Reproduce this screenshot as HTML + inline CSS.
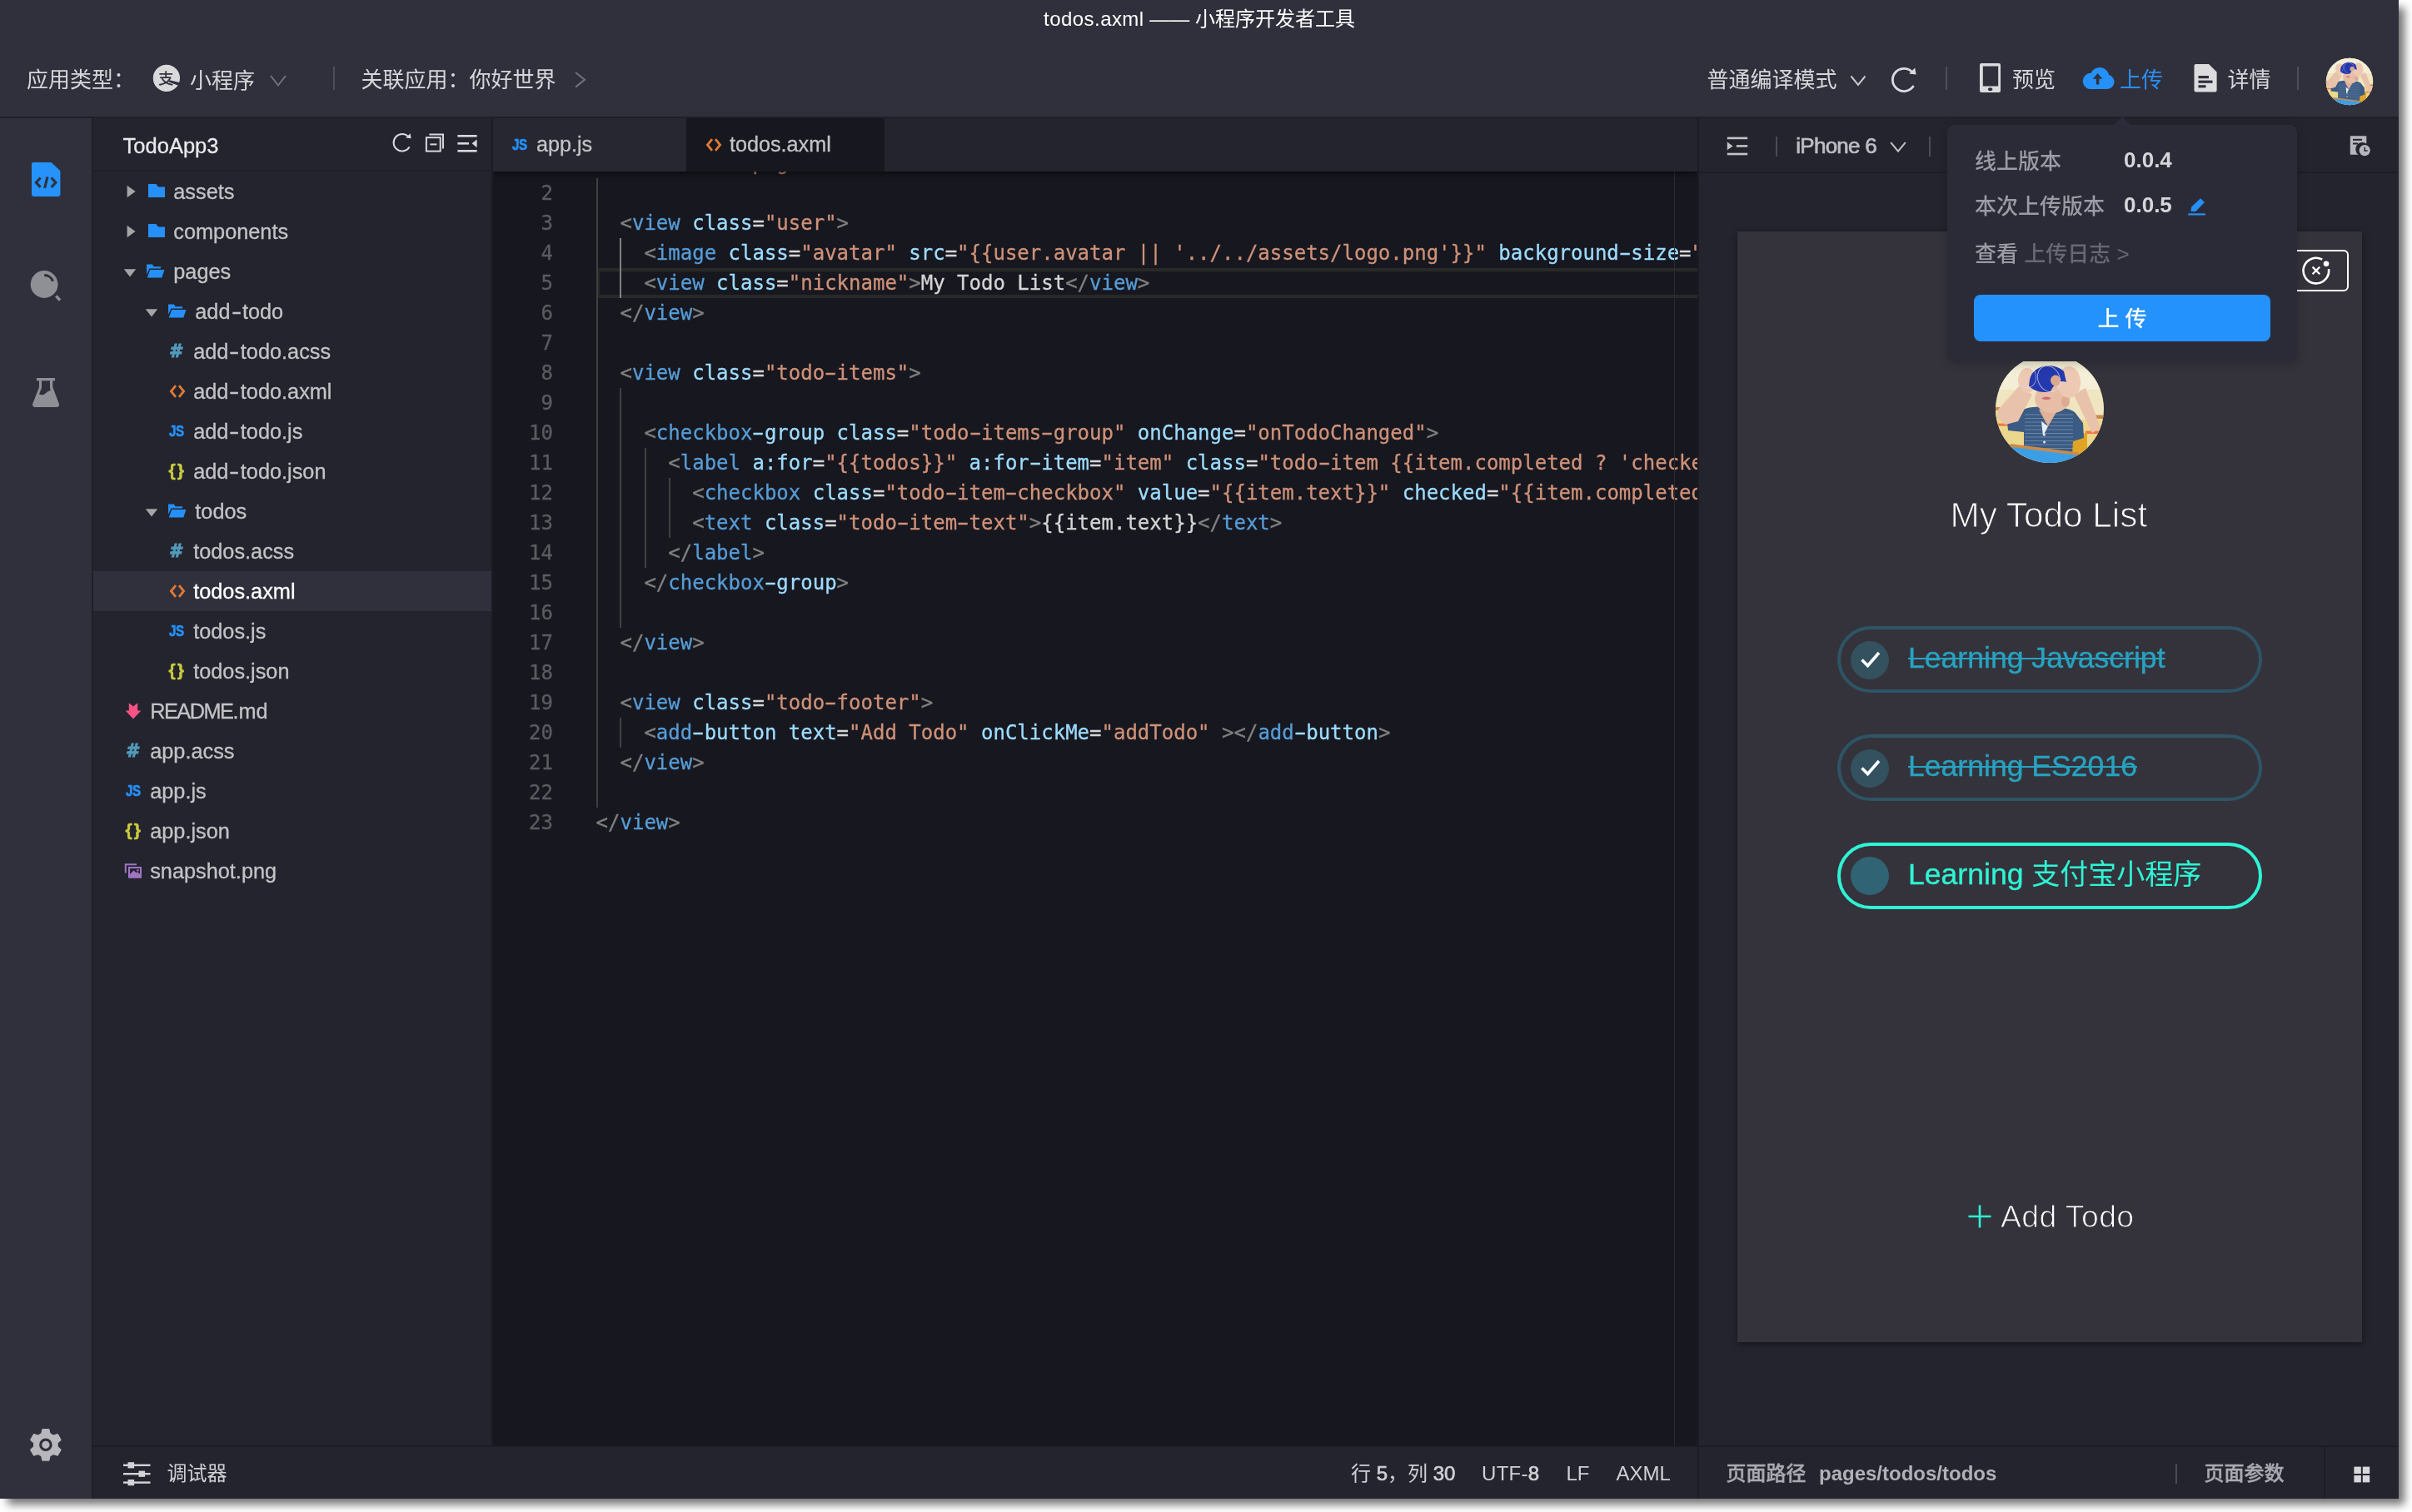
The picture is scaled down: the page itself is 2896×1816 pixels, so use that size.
<!DOCTYPE html>
<html lang="zh-CN">
<head>
<meta charset="utf-8">
<title>todos.axml —— 小程序开发者工具</title>
<style>
*{box-sizing:border-box;margin:0;padding:0}
html,body{width:2896px;height:1816px;overflow:hidden;background:#fff}
body{font-family:"Liberation Sans","Noto Sans CJK SC",sans-serif;color:#d6d6da;position:relative;-webkit-font-smoothing:antialiased}
.abs{position:absolute}
#win{will-change:transform;position:absolute;left:0;top:0;width:2880px;height:1800px;background:#30303c;box-shadow:8px 8px 10px -1px rgba(0,0,0,.55);overflow:visible}
#clip{position:absolute;left:0;top:0;width:2880px;height:1800px;overflow:hidden}
/* title + toolbar */
#title{position:absolute;left:0;top:0;width:2880px;height:46px;text-align:center;font-size:24px;line-height:46px;color:#fff;white-space:nowrap}
#toolbar{position:absolute;left:0;top:0;width:2880px;height:140px;background:#30303c}
.tb{position:absolute;font-size:26px;line-height:40px;height:40px;top:76px;white-space:nowrap;color:#d6d6da}
.vsep{position:absolute;width:2px;background:#4d4d59}
#tbline{position:absolute;left:0;top:140px;width:2880px;height:2px;background:#1f1f28}
/* activity bar */
#act{position:absolute;left:0;top:142px;width:110px;height:1658px;background:#30303c}
#actline{position:absolute;left:110px;top:142px;width:2px;height:1658px;background:#1f1f28}
/* sidebar */
#side{position:absolute;left:112px;top:142px;width:478px;height:1594px;background:#24242e}
#sidehead{position:absolute;left:0;top:0;width:478px;height:64px;border-bottom:2px solid #1e1e27}
#sideline{position:absolute;left:590px;top:142px;width:2px;height:1594px;background:#1b1b23}
.row{position:absolute;left:0;width:478px;height:48px;font-size:25.3px;line-height:48px;color:#c3c3c6;white-space:nowrap}
.row.sel{background:#30303c;color:#fff}
.row span.t{position:absolute;top:0;-webkit-text-stroke-width:.3px}
.hy{display:inline-block;width:14.4px;text-align:center;transform:scaleX(1.45)}
/* editor */
#tabs{position:absolute;left:592px;top:142px;width:1446px;height:64px;background:#24242e;z-index:5;box-shadow:0 3px 6px rgba(0,0,0,.5);clip-path:inset(0 0 -12px 0)}
.tab{-webkit-text-stroke-width:.3px;position:absolute;top:0;height:64px;font-size:25.2px;line-height:64px;color:#c3c3c6;white-space:nowrap}
#editor{position:absolute;left:592px;top:206px;width:1446px;height:1530px;background:#17171f;overflow:hidden}
.ln{position:absolute;left:0;width:72px;text-align:right;font:24px/36px "DejaVu Sans Mono","Liberation Mono",monospace;color:#5b5b60;height:36px}
.cl{position:absolute;left:123.6px;height:36px;font:24px/36px "DejaVu Sans Mono","Liberation Mono",monospace;white-space:pre;color:#d4d4d4}
.g{position:absolute;width:2px;background:#404040}
.g.a{background:#808080}
.cl i{font-style:normal;display:inline-block;transform:scaleX(1.75)}
.cl,.ln{-webkit-text-stroke-width:.3px}
.p{color:#808080}.n{color:#569cd6}.a{color:#9cdcfe}.s{color:#ce9178}
/* simulator */
#sim{position:absolute;left:2040px;top:142px;width:840px;height:1594px;background:#24242e}
#simline{position:absolute;left:2038px;top:142px;width:2px;height:1658px;background:#1b1b23}
#simhead{position:absolute;left:0;top:0;width:840px;height:66px;border-bottom:2px solid #1d1d26}
#phone{position:absolute;left:46px;top:136px;width:750px;height:1334px;background:#34333b;box-shadow:0 2px 8px rgba(0,0,0,.45);overflow:hidden}
/* status */
#status{position:absolute;left:112px;top:1736px;width:2768px;height:64px;background:#24242e;border-top:2px solid #1c1c24;font-size:24px;line-height:62px;color:#d0d0d4}
.st b{font-weight:400;-webkit-text-stroke-width:.7px}
.st{position:absolute;top:1px;height:62px;white-space:nowrap}
/* popup */
#pop{position:absolute;left:2338px;top:150px;width:420px;height:284px;background:#2b2b38;border-radius:9px;box-shadow:0 3px 12px rgba(0,0,0,.22);z-index:20}
.pl{margin-top:1.5px;font-size:26px;line-height:40px;color:#9b9ba3;font-weight:500;white-space:pre}
.pv{font-size:26px;line-height:40px;color:#d6d6da;font-weight:700;white-space:pre}
</style>
</head>
<body>
<svg width="0" height="0" style="position:absolute"><symbol id="avatar" viewBox="0 0 130 130">
<rect width="130" height="130" fill="#efe5c0"/>
<rect width="130" height="42" fill="#f4efd6"/>
<path d="M0 68 H40 V130 H0 Z" fill="#ecd88c"/><path d="M100 78 H130 V130 H100 Z" fill="#ecd88c"/>
<rect x="0" y="63" width="5" height="4" fill="#c98a4a"/><rect x="112" y="72.500" width="18" height="4.500" fill="#c98a4a"/>
<rect x="0" y="82.500" width="16" height="3.200" fill="#ee7a4a"/><rect x="108" y="91.500" width="22" height="3.600" fill="#ee7a4a"/>
<path d="M92 94 H110 V122 H92 Z" fill="#e0a526"/>
<path d="M36 65 C46 61 84 61 95 69 L105 82 L106 100 L93 104 L92 120 L34 112 L34 93 L15 91 L14 80 L24 66 Z" fill="#3b5b84"/>
<g stroke="#9db2cc" stroke-width=".700" fill="none" opacity=".700"><path d="M35 72 H93 M35 76.500 H93 M35 81 H93 M35 85.500 H93 M35 90 H93 M35 94.500 H93 M35 99 H93 M35 103.500 H93 M35 108 H93 M35 112.500 H93"/></g>
<path d="M52 66 L63 86 L76 64 Z" fill="#e1b199"/><path d="M55 80 L57 98 L63 86 Z" fill="#e9eef2"/>
<circle cx="58.500" cy="96" r="1.500" fill="#dfe6ee"/><circle cx="58.500" cy="105" r="1.500" fill="#dfe6ee"/>
<ellipse cx="68" cy="53" rx="21" ry="17" fill="#e8bda6"/>
<ellipse cx="84" cy="56" rx="5" ry="7" fill="#deaa92"/>
<path d="M55 52.500 Q61 48.500 67 52.500 Q61 55.500 55 52.500 Z" fill="#c96f72"/>
<path d="M3 66 L28 38 L44 48 L27 80 L12 84 L2 76 Z" fill="#e9c2ab"/>
<path d="M116 94 L94 48 L108 40 L118 66 L126 88 Z" fill="#e9c2ab"/>
<ellipse cx="38" cy="31" rx="11" ry="15" fill="#edc9b4"/><ellipse cx="88" cy="33" rx="14" ry="19" fill="#edc9b4"/>
<path d="M41 30 C44 12 70 8 82 20 L85 33 C78 30 71 34 66 44 C56 47 44 43 40 37 Z" fill="#2439ae"/>
<ellipse cx="72" cy="31" rx="6" ry="6.500" fill="#d9a88e"/>
<ellipse cx="36" cy="25" rx="12" ry="15" fill="none" stroke="#dfe3f0" stroke-width=".900" opacity=".600" transform="rotate(-25 36 25)"/>
<ellipse cx="64" cy="29" rx="13" ry="16" fill="none" stroke="#dfe3f0" stroke-width=".900" opacity=".700" transform="rotate(-25 64 29)"/>
<path d="M18 107 L100 117.500 L100 121.500 L16 111 Z" fill="#c98a4a"/>
<path d="M16 110.500 L100 121 L112 130 H8 Z" fill="#3c9ee4"/>
</symbol></svg>
<div id="win">
<div id="clip">
<div id="toolbar">
  <div class="tb" style="left:32px">应用类型：</div>
  <svg class="abs" style="left:183px;top:77px" width="34" height="34" viewBox="183 77 34 34"><circle cx="199.900" cy="93.900" r="16.100" fill="#d9d9dc"/><text x="199.300" y="101" text-anchor="middle" font-family="Noto Sans CJK SC, sans-serif" font-size="18.500" font-weight="500" fill="#33333f">支</text><path d="M203.500 96.300 L216.400 99.300 L215 103 L202.600 98.600 Z" fill="#30303c"/></svg>
  <div class="tb" style="left:228px;top:77px">小程序</div>
  <svg class="abs" style="left:322px;top:88px" width="24" height="18" viewBox="0 0 24 18"><path d="M3 3 L12 14.5 L21 3" fill="none" stroke="#72727e" stroke-width="2"/></svg>
  <div class="vsep" style="left:400px;top:80px;height:28px"></div>
  <div class="tb" style="left:433.5px">关联应用：你好世界</div>
  <svg class="abs" style="left:686px;top:84px" width="20" height="24" viewBox="0 0 20 24"><path d="M5 3 L16 11.8 L5 20.6" fill="none" stroke="#72727e" stroke-width="2"/></svg>

  <div class="tb" style="left:2049.5px">普通编译模式</div>
  <svg class="abs" style="left:2219px;top:88px" width="24" height="18" viewBox="0 0 24 18"><path d="M3.5 3.5 L12 14 L20.5 3.5" fill="none" stroke="#c8c8cc" stroke-width="2"/></svg>
  <svg class="abs" style="left:2268px;top:78px" width="36" height="36" viewBox="0 0 36 36"><path d="M29.2 10.2 A13.6 13.6 0 1 0 29.6 25" fill="none" stroke="#dadade" stroke-width="2.8"/><path d="M24.2 10.6 L32.6 11.6 L31.2 3.6 Z" fill="#dadade"/></svg>
  <div class="vsep" style="left:2336px;top:80px;height:28px"></div>
  <svg class="abs" style="left:2376px;top:75px" width="28" height="38" viewBox="0 0 28 38"><path fill-rule="evenodd" fill="#dcdcde" d="M3 1 H24 a2 2 0 0 1 2 2 V34 a2 2 0 0 1 -2 2 H3 a2 2 0 0 1 -2 -2 V3 a2 2 0 0 1 2 -2 Z M4.8 4.4 V28.4 H23.2 V4.4 Z M13.6 30.3 a2.8 2 0 1 0 0.01 0 Z"/></svg>
  <div class="tb" style="left:2416px">预览</div>
  <svg class="abs" style="left:2497.500px;top:78px" width="42" height="32" viewBox="0 0 42 32"><path fill="#2590f8" d="M10.5 29 H32 a8.6 8.6 0 0 0 2.2 -16.9 A11.4 11.4 0 0 0 12.6 9.8 A9.7 9.7 0 0 0 10.5 29 Z"/><path fill="#30303c" d="M20.600 10 L26.400 16.800 H22.300 V23.600 H18.900 V16.800 H14.800 Z"/></svg>
  <div class="tb" style="left:2545px;color:#2a8ff7">上传</div>
  <svg class="abs" style="left:2633px;top:76px" width="30" height="36" viewBox="0 0 30 36"><path fill="#dcdcde" d="M3.5 1 H19 L28.6 10.6 V32.5 a2 2 0 0 1 -2 2 H3.5 a2 2 0 0 1 -2 -2 V3 a2 2 0 0 1 2 -2 Z"/><g fill="#30303c"><rect x="6.5" y="15" width="12.5" height="3.2"/><rect x="6.5" y="20.6" width="17" height="3.2"/><rect x="6.5" y="26.2" width="9" height="3.2"/></g></svg>
  <div class="tb" style="left:2674.5px">详情</div>
  <div class="vsep" style="left:2758px;top:80px;height:28px"></div>
  <svg class="abs" style="left:2792px;top:69px" width="58" height="58" viewBox="0 0 58 58"><defs><clipPath id="avc1"><circle cx="29" cy="29" r="28.300"/></clipPath></defs><g clip-path="url(#avc1)"><use href="#avatar" x="0" y="0" width="58" height="58"/></g></svg>
</div>
<div id="title"><span style="letter-spacing:.45px">todos.axml</span> —— 小程序开发者工具</div>
<div id="tbline"></div>
<div id="act">
<svg class="abs" style="left:36px;top:51px" width="40" height="46" viewBox="36 193 40 46"><path fill="#2593fb" d="M40.4 195 H61.6 L72.4 205.2 V233.6 a2.4 2.4 0 0 1 -2.4 2.4 H40.4 a2.4 2.4 0 0 1 -2.4 -2.4 V197.4 a2.4 2.4 0 0 1 2.4 -2.4 Z"/><g fill="none" stroke="#30303c" stroke-width="3.1"><path d="M48.6 213.5 L43.4 219.2 L48.6 224.9"/><path d="M53.6 225.8 L57 212.4"/><path d="M61.7 213.5 L66.9 219.2 L61.7 224.9"/></g></svg>
<svg class="abs" style="left:34px;top:180px" width="42" height="42" viewBox="34 322 42 42"><circle cx="53.1" cy="341.5" r="16.4" fill="#8f8f96"/><path d="M53.2 330.6 A10.9 10.9 0 0 1 63.5 337.8" fill="none" stroke="#30303c" stroke-width="3"/><path d="M67.3 355.4 L72 360.6" stroke="#8f8f96" stroke-width="3.6" fill="none"/></svg>
<svg class="abs" style="left:36px;top:309px" width="38" height="40" viewBox="36 451 38 40"><path fill="#8f8f96" fill-rule="evenodd" d="M44 453.9 H66 V457.2 H63.3 V465 L70.9 485 a3 3 0 0 1 -2.8 4 H42 a3 3 0 0 1 -2.8 -4 L47 465 V457.2 H44 Z M50 457.2 V465.8 L47 473.6 C50.6 474.9 52.8 474.2 55 472.2 C57 470.4 58.6 469.5 60.7 469 L60 465.8 V457.2 Z"/></svg>
<svg class="abs" style="left:33px;top:1571px" width="44" height="44" viewBox="33 1713 44 44"><path d="M50.40 1722.15 L51.41 1717.13 L58.39 1717.13 L59.40 1722.15 L64.04 1724.82 L68.89 1723.19 L72.38 1729.24 L68.54 1732.63 L68.54 1737.97 L72.38 1741.36 L68.89 1747.41 L64.04 1745.78 L59.40 1748.45 L58.39 1753.47 L51.41 1753.47 L50.40 1748.45 L45.76 1745.78 L40.91 1747.41 L37.42 1741.36 L41.26 1737.97 L41.26 1732.63 L37.42 1729.24 L40.91 1723.19 L45.76 1724.82 Z" fill="#b7b7bc" stroke="#b7b7bc" stroke-width="2.4" stroke-linejoin="round"/><circle cx="54.9" cy="1735.3" r="6.2" fill="none" stroke="#30303c" stroke-width="3.2"/></svg>
</div>
<div id="actline"></div>
<div id="side">
<div id="sidehead"><span class="abs" style="left:35.6px;top:3px;font-size:25.5px;line-height:60px;color:#e9e9ec;-webkit-text-stroke-width:.3px">TodoApp3</span>
<svg class="abs" style="left:356px;top:14px" width="30" height="30" viewBox="468 156 30 30"><path d="M490.6 164.6 A10.2 10.2 0 1 0 491.6 176.4" fill="none" stroke="#d8d8dc" stroke-width="2"/><path d="M487.2 165.6 L493.6 166.2 L492.6 160.2 Z" fill="#d8d8dc"/></svg>
<svg class="abs" style="left:396px;top:14px" width="30" height="30" viewBox="508 156 30 30"><g fill="none" stroke="#d8d8dc" stroke-width="2"><rect x="511.9" y="165.2" width="16.8" height="16.4"/><path d="M515.4 161.4 H532 V178.6"/><path d="M516.4 173.4 H524.4"/></g></svg>
<svg class="abs" style="left:434px;top:14px" width="30" height="30" viewBox="546 156 30 30"><g fill="#d8d8dc"><rect x="549.4" y="162" width="23.2" height="2.6"/><rect x="549.4" y="171" width="13.6" height="2.6"/><rect x="549.4" y="180" width="23.2" height="2.6"/><path d="M566.6 172.3 L572.6 167.4 V177.2 Z"/></g></svg>
</div>
<div class="row" style="top:64px"><svg class="abs" style="left:38px;top:15px" width="14" height="18" viewBox="0 0 14 18"><path d="M2.6 1.8 L12.6 9 L2.6 16.2 Z" fill="#a5a5a9"/></svg><svg class="abs" style="left:65px;top:14px" width="22" height="18" viewBox="0 0 22 18"><path fill="#2590f8" d="M1 1 H10.4 L13 4.4 H21 V17 H1 Z"/></svg><span class="t" style="left:96.3px">assets</span></div>
<div class="row" style="top:112px"><svg class="abs" style="left:38px;top:15px" width="14" height="18" viewBox="0 0 14 18"><path d="M2.6 1.8 L12.6 9 L2.6 16.2 Z" fill="#a5a5a9"/></svg><svg class="abs" style="left:65px;top:14px" width="22" height="18" viewBox="0 0 22 18"><path fill="#2590f8" d="M1 1 H10.4 L13 4.4 H21 V17 H1 Z"/></svg><span class="t" style="left:96.3px">components</span></div>
<div class="row" style="top:160px"><svg class="abs" style="left:35px;top:20px" width="18" height="12" viewBox="0 0 18 12"><path d="M1.8 1.2 H16.2 L9 10.4 Z" fill="#a5a5a9"/></svg><svg class="abs" style="left:62.2px;top:14px" width="24.4" height="18.8" viewBox="0 0 26 20"><path fill="#2590f8" d="M2.2 14.6 V1.6 H9.4 L11.4 4.6 H20.2 V7 H5.8 Z"/><path fill="#2590f8" d="M6.6 8.6 H25 L21.6 18.6 H3 Z"/></svg><span class="t" style="left:96.3px">pages</span></div>
<div class="row" style="top:208px"><svg class="abs" style="left:61px;top:20px" width="18" height="12" viewBox="0 0 18 12"><path d="M1.8 1.2 H16.2 L9 10.4 Z" fill="#a5a5a9"/></svg><svg class="abs" style="left:88.2px;top:14px" width="24.4" height="18.8" viewBox="0 0 26 20"><path fill="#2590f8" d="M2.2 14.6 V1.6 H9.4 L11.4 4.6 H20.2 V7 H5.8 Z"/><path fill="#2590f8" d="M6.6 8.6 H25 L21.6 18.6 H3 Z"/></svg><span class="t" style="left:122.3px">add<span class="hy">-</span>todo</span></div>
<div class="row" style="top:256px"><span class="abs" style="left:91px;top:0;font:bold italic 21px/48px 'DejaVu Sans',sans-serif;color:#519aba;-webkit-text-stroke:.9px #519aba">#</span><span class="t" style="left:120.2px">add<span class="hy">-</span>todo.acss</span></div>
<div class="row" style="top:304px"><svg class="abs" style="left:91px;top:15px" width="20" height="18" viewBox="0 0 20 18"><g fill="none" stroke="#e37933" stroke-width="2.8"><path d="M8 2.2 L2.4 9 L8 15.8"/><path d="M12 2.2 L17.6 9 L12 15.8"/></g></svg><span class="t" style="left:120.2px">add<span class="hy">-</span>todo.axml</span></div>
<div class="row" style="top:352px"><span class="abs" style="left:91px;top:0;display:inline-block;transform:scaleX(.8);transform-origin:0 50%;font:bold 18.8px/48px 'Liberation Sans',sans-serif;letter-spacing:-.4px;color:#2590f8;-webkit-text-stroke:.7px #2590f8;margin-left:0">JS</span><span class="t" style="left:120.2px">add<span class="hy">-</span>todo.js</span></div>
<div class="row" style="top:400px"><span class="abs" style="left:91px;top:-1.5px;font:bold 21px/48px 'Liberation Sans',sans-serif;letter-spacing:2px;color:#cbcb41;-webkit-text-stroke:.5px #cbcb41;margin-left:-.5px">{}</span><span class="t" style="left:120.2px">add<span class="hy">-</span>todo.json</span></div>
<div class="row" style="top:448px"><svg class="abs" style="left:61px;top:20px" width="18" height="12" viewBox="0 0 18 12"><path d="M1.8 1.2 H16.2 L9 10.4 Z" fill="#a5a5a9"/></svg><svg class="abs" style="left:88.2px;top:14px" width="24.4" height="18.8" viewBox="0 0 26 20"><path fill="#2590f8" d="M2.2 14.6 V1.6 H9.4 L11.4 4.6 H20.2 V7 H5.8 Z"/><path fill="#2590f8" d="M6.6 8.6 H25 L21.6 18.6 H3 Z"/></svg><span class="t" style="left:122.3px">todos</span></div>
<div class="row" style="top:496px"><span class="abs" style="left:91px;top:0;font:bold italic 21px/48px 'DejaVu Sans',sans-serif;color:#519aba;-webkit-text-stroke:.9px #519aba">#</span><span class="t" style="left:120.2px">todos.acss</span></div>
<div class="row sel" style="top:544px"><svg class="abs" style="left:91px;top:15px" width="20" height="18" viewBox="0 0 20 18"><g fill="none" stroke="#e37933" stroke-width="2.8"><path d="M8 2.2 L2.4 9 L8 15.8"/><path d="M12 2.2 L17.6 9 L12 15.8"/></g></svg><span class="t" style="left:120.2px">todos.axml</span></div>
<div class="row" style="top:592px"><span class="abs" style="left:91px;top:0;display:inline-block;transform:scaleX(.8);transform-origin:0 50%;font:bold 18.8px/48px 'Liberation Sans',sans-serif;letter-spacing:-.4px;color:#2590f8;-webkit-text-stroke:.7px #2590f8;margin-left:0">JS</span><span class="t" style="left:120.2px">todos.js</span></div>
<div class="row" style="top:640px"><span class="abs" style="left:91px;top:-1.5px;font:bold 21px/48px 'Liberation Sans',sans-serif;letter-spacing:2px;color:#cbcb41;-webkit-text-stroke:.5px #cbcb41;margin-left:-.5px">{}</span><span class="t" style="left:120.2px">todos.json</span></div>
<div class="row" style="top:688px"><svg class="abs" style="left:38.2px;top:13px" width="20" height="22" viewBox="0 0 20 22"><path fill="#f55385" d="M4.8 1.2 L10 5.6 L15.2 1.2 V10.6 H19.4 L10 20.6 L0.6 10.6 H4.8 Z"/></svg><span class="t" style="left:68.2px"><span style="letter-spacing:-1.5px">README</span>.md</span></div>
<div class="row" style="top:736px"><span class="abs" style="left:39px;top:0;font:bold italic 21px/48px 'DejaVu Sans',sans-serif;color:#519aba;-webkit-text-stroke:.9px #519aba">#</span><span class="t" style="left:68.2px">app.acss</span></div>
<div class="row" style="top:784px"><span class="abs" style="left:39px;top:0;display:inline-block;transform:scaleX(.8);transform-origin:0 50%;font:bold 18.8px/48px 'Liberation Sans',sans-serif;letter-spacing:-.4px;color:#2590f8;-webkit-text-stroke:.7px #2590f8;margin-left:0">JS</span><span class="t" style="left:68.2px">app.js</span></div>
<div class="row" style="top:832px"><span class="abs" style="left:39px;top:-1.5px;font:bold 21px/48px 'Liberation Sans',sans-serif;letter-spacing:2px;color:#cbcb41;-webkit-text-stroke:.5px #cbcb41;margin-left:-.5px">{}</span><span class="t" style="left:68.2px">app.json</span></div>
<div class="row" style="top:880px"><svg class="abs" style="left:37px;top:14px" width="22" height="20" viewBox="0 0 22 20"><path fill="none" stroke="#a074c4" stroke-width="2" d="M15 2.2 H1.8 V12.4"/><path fill="#a074c4" fill-rule="evenodd" d="M5 5 H21 V18.8 H5 Z M7 7 V14 L11.6 9.4 L14.6 12.4 L16 11 L19 14 V7 Z M16.4 8 a1.3 1.3 0 1 0 .01 0 Z"/></svg><span class="t" style="left:68.2px">snapshot.png</span></div>
</div>
<div id="sideline"></div>
<div id="tabs">
<div class="tab" style="left:0;width:232px;background:#272731"><span class="abs" style="left:23px;top:0;display:inline-block;transform:scaleX(.8);transform-origin:0 50%;font:bold 18.8px/64px 'Liberation Sans',sans-serif;letter-spacing:-.4px;color:#2590f8;-webkit-text-stroke:.7px #2590f8">JS</span><span class="abs" style="left:52px;top:-1px">app.js</span></div>
<div class="tab" style="left:232px;width:238px;background:#17171f"><svg class="abs" style="left:23px;top:23px" width="20" height="18" viewBox="0 0 20 18"><g fill="none" stroke="#e37933" stroke-width="2.8"><path d="M8 2.2 L2.4 9 L8 15.8"/><path d="M12 2.2 L17.6 9 L12 15.8"/></g></svg><span class="abs" style="left:52px;top:-1px">todos.axml</span></div>
</div>
<div id="editor">
<div class="abs" style="left:126px;top:116px;width:1320px;height:36px;border-top:4px solid #282828;border-bottom:4px solid #282828;border-left:2px solid #282828"></div>
<div class="g" style="left:124px;top:8px;height:756px"></div>
<div class="g a" style="left:152px;top:80px;height:72px"></div>
<div class="g" style="left:152px;top:260px;height:288px"></div>
<div class="g" style="left:152px;top:656px;height:36px"></div>
<div class="g" style="left:181.5px;top:332px;height:144px"></div>
<div class="g" style="left:210.5px;top:368px;height:72px"></div>
<div class="ln" style="top:-28px">1</div><div class="cl" style="top:-28px"><span class="p">&lt;</span><span class="n">view</span> <span class="a">class</span>=<span class="s">"page"</span><span class="p">&gt;</span></div>
<div class="ln" style="top:8px">2</div><div class="cl" style="top:8px"></div>
<div class="ln" style="top:44px">3</div><div class="cl" style="top:44px">  <span class="p">&lt;</span><span class="n">view</span> <span class="a">class</span>=<span class="s">"user"</span><span class="p">&gt;</span></div>
<div class="ln" style="top:80px">4</div><div class="cl" style="top:80px">    <span class="p">&lt;</span><span class="n">image</span> <span class="a">class</span>=<span class="s">"avatar"</span> <span class="a">src</span>=<span class="s">"{{user.avatar || '../../assets/logo.png'}}"</span> <span class="a">background<i>-</i>size</span>=<span class="s">"</span></div>
<div class="ln" style="top:116px">5</div><div class="cl" style="top:116px">    <span class="p">&lt;</span><span class="n">view</span> <span class="a">class</span>=<span class="s">"nickname"</span><span class="p">&gt;</span>My Todo List<span class="p">&lt;/</span><span class="n">view</span><span class="p">&gt;</span></div>
<div class="ln" style="top:152px">6</div><div class="cl" style="top:152px">  <span class="p">&lt;/</span><span class="n">view</span><span class="p">&gt;</span></div>
<div class="ln" style="top:188px">7</div><div class="cl" style="top:188px"></div>
<div class="ln" style="top:224px">8</div><div class="cl" style="top:224px">  <span class="p">&lt;</span><span class="n">view</span> <span class="a">class</span>=<span class="s">"todo<i>-</i>items"</span><span class="p">&gt;</span></div>
<div class="ln" style="top:260px">9</div><div class="cl" style="top:260px"></div>
<div class="ln" style="top:296px">10</div><div class="cl" style="top:296px">    <span class="p">&lt;</span><span class="n">checkbox</span><span class="a"><i>-</i>group</span> <span class="a">class</span>=<span class="s">"todo<i>-</i>items<i>-</i>group"</span> <span class="a">onChange</span>=<span class="s">"onTodoChanged"</span><span class="p">&gt;</span></div>
<div class="ln" style="top:332px">11</div><div class="cl" style="top:332px">      <span class="p">&lt;</span><span class="n">label</span> <span class="a">a:for</span>=<span class="s">"{{todos}}"</span> <span class="a">a:for<i>-</i>item</span>=<span class="s">"item"</span> <span class="a">class</span>=<span class="s">"todo<i>-</i>item {{item.completed ? 'checked</span></div>
<div class="ln" style="top:368px">12</div><div class="cl" style="top:368px">        <span class="p">&lt;</span><span class="n">checkbox</span> <span class="a">class</span>=<span class="s">"todo<i>-</i>item<i>-</i>checkbox"</span> <span class="a">value</span>=<span class="s">"{{item.text}}"</span> <span class="a">checked</span>=<span class="s">"{{item.completed</span></div>
<div class="ln" style="top:404px">13</div><div class="cl" style="top:404px">        <span class="p">&lt;</span><span class="n">text</span> <span class="a">class</span>=<span class="s">"todo<i>-</i>item<i>-</i>text"</span><span class="p">&gt;</span>{{item.text}}<span class="p">&lt;/</span><span class="n">text</span><span class="p">&gt;</span></div>
<div class="ln" style="top:440px">14</div><div class="cl" style="top:440px">      <span class="p">&lt;/</span><span class="n">label</span><span class="p">&gt;</span></div>
<div class="ln" style="top:476px">15</div><div class="cl" style="top:476px">    <span class="p">&lt;/</span><span class="n">checkbox</span><span class="a"><i>-</i>group</span><span class="p">&gt;</span></div>
<div class="ln" style="top:512px">16</div><div class="cl" style="top:512px"></div>
<div class="ln" style="top:548px">17</div><div class="cl" style="top:548px">  <span class="p">&lt;/</span><span class="n">view</span><span class="p">&gt;</span></div>
<div class="ln" style="top:584px">18</div><div class="cl" style="top:584px"></div>
<div class="ln" style="top:620px">19</div><div class="cl" style="top:620px">  <span class="p">&lt;</span><span class="n">view</span> <span class="a">class</span>=<span class="s">"todo<i>-</i>footer"</span><span class="p">&gt;</span></div>
<div class="ln" style="top:656px">20</div><div class="cl" style="top:656px">    <span class="p">&lt;</span><span class="n">add</span><span class="a"><i>-</i>button</span> <span class="a">text</span>=<span class="s">"Add Todo"</span> <span class="a">onClickMe</span>=<span class="s">"addTodo"</span> <span class="p">&gt;</span><span class="p">&lt;/</span><span class="n">add</span><span class="a"><i>-</i>button</span><span class="p">&gt;</span></div>
<div class="ln" style="top:692px">21</div><div class="cl" style="top:692px">  <span class="p">&lt;/</span><span class="n">view</span><span class="p">&gt;</span></div>
<div class="ln" style="top:728px">22</div><div class="cl" style="top:728px"></div>
<div class="ln" style="top:764px">23</div><div class="cl" style="top:764px"><span class="p">&lt;/</span><span class="n">view</span><span class="p">&gt;</span></div>
<div class="abs" style="left:1418px;top:0;width:1px;height:1530px;background:#2b2b31"></div>
</div>
<div id="simline"></div>
<div id="sim"><div id="simhead">
<svg class="abs" style="left:32px;top:20px" width="28" height="28" viewBox="2072 162 28 28"><g fill="#c2c2c7"><rect x="2073.800" y="164.600" width="24.400" height="2.600"/><rect x="2084.800" y="174.100" width="13.400" height="2.600"/><rect x="2073.800" y="183.700" width="24.400" height="2.600"/><path d="M2073.800 170.600 L2080.600 175.400 L2073.800 180.200 Z"/></g></svg>
<div class="vsep" style="left:92px;top:22px;height:24px;background:#4b4b56"></div>
<div class="abs" style="left:116.300px;top:1px;font-size:26px;line-height:64px;letter-spacing:-.75px;color:#bdbdc3;-webkit-text-stroke:.7px #bdbdc3;white-space:pre">iPhone 6</div>
<svg class="abs" style="left:228px;top:26px" width="22" height="16" viewBox="0 0 22 16"><path d="M2.200 3.200 L11 13.600 L19.800 3.200" fill="none" stroke="#c2c2c7" stroke-width="2"/></svg>
<div class="vsep" style="left:276px;top:22px;height:24px;background:#4b4b56"></div>
<svg class="abs" style="left:780px;top:20px" width="28" height="28" viewBox="2820 162 28 28"><path fill="#b6b6bc" d="M2821.800 163.200 H2841.300 V172.500 A7.900 7.900 0 0 0 2831.600 185.800 H2821.800 Z"/><g fill="#24242e"><rect x="2825" y="166.800" width="11" height="2"/><rect x="2825" y="171.500" width="6" height="2"/></g><circle cx="2839.200" cy="180.600" r="6.600" fill="#b6b6bc"/><path d="M2839.200 176.800 V181 H2842.600" fill="none" stroke="#24242e" stroke-width="1.500"/></svg>
</div>
<div id="phone">
<div class="abs" style="left:560px;top:22px;width:174px;height:50px;border:2px solid #fff;border-radius:6px"></div>
<svg class="abs" style="left:674px;top:26px" width="42" height="42" viewBox="2760 304 42 42"><path d="M2788.200 311.700 A15.300 15.300 0 1 0 2796 323.200" fill="none" stroke="#fff" stroke-width="2.600"/><circle cx="2793" cy="316.700" r="3.300" fill="#fff"/><path d="M2776.600 320.600 L2785.200 329.200 M2785.200 320.600 L2776.600 329.200" stroke="#fff" stroke-width="2.200"/></svg>
<svg class="abs" style="left:310px;top:148px" width="130" height="130" viewBox="0 0 130 130"><defs><clipPath id="avc2"><circle cx="65" cy="65" r="65"/></clipPath></defs><g clip-path="url(#avc2)"><use href="#avatar" width="130" height="130"/></g></svg>
<div class="abs lt" style="left:-1.200px;top:312.500px;width:750px;text-align:center;font-size:42.300px;line-height:56px;color:#fff;-webkit-text-stroke:1.100px #34333b">My Todo List</div>
<div class="abs" style="left:120px;top:474px;width:510px;height:80px;border:4px solid #2e5466;border-radius:40px"></div>
<div class="abs" style="left:136px;top:491.5px;width:46px;height:46px;border-radius:23px;background:#33515f"></div>
<svg class="abs" style="left:146px;top:502px" width="28" height="24" viewBox="0 0 28 24"><path d="M3.500 12.500 L10.500 19.500 L24 4" fill="none" stroke="#fff" stroke-width="3.600"/></svg>
<div class="abs" style="left:205px;top:488px;font-size:34px;line-height:48px;color:#27a2c1;text-decoration:line-through;text-decoration-thickness:2px;white-space:pre"><span style="font-size:35.600px;-webkit-text-stroke-width:.35px">Learning Javascript</span></div>
<div class="abs" style="left:120px;top:604px;width:510px;height:80px;border:4px solid #2e5466;border-radius:40px"></div>
<div class="abs" style="left:136px;top:621.5px;width:46px;height:46px;border-radius:23px;background:#33515f"></div>
<svg class="abs" style="left:146px;top:632px" width="28" height="24" viewBox="0 0 28 24"><path d="M3.500 12.500 L10.500 19.500 L24 4" fill="none" stroke="#fff" stroke-width="3.600"/></svg>
<div class="abs" style="left:205px;top:618px;font-size:34px;line-height:48px;color:#27a2c1;text-decoration:line-through;text-decoration-thickness:2px;white-space:pre"><span style="font-size:35.600px;-webkit-text-stroke-width:.35px">Learning ES2016</span></div>
<div class="abs" style="left:120px;top:734px;width:510px;height:80px;border:4px solid #2ef5d5;border-radius:40px"></div>
<div class="abs" style="left:136px;top:751px;width:46px;height:46px;border-radius:23px;background:#306373"></div>
<div class="abs" style="left:205px;top:748px;font-size:34px;line-height:48px;color:#2ef5d5;white-space:pre"><span style="font-size:35.600px;-webkit-text-stroke-width:.35px">Learning </span>支付宝小程序</div>
<svg class="abs" style="left:276px;top:1168px" width="30" height="30" viewBox="0 0 30 30"><path d="M1.500 15 H28.500 M15 1.500 V28.500" stroke="#2ef5d5" stroke-width="2.600"/></svg>
<div class="abs" style="left:316px;top:1155px;font-size:37.400px;letter-spacing:.4px;line-height:56px;color:#fff;white-space:pre;-webkit-text-stroke:1px #34333b">Add Todo</div>
</div></div>
<div id="status">
<svg class="abs" style="left:34px;top:14.500px" width="36" height="32" viewBox="146 1752 36 32"><g fill="#d4d4d8"><rect x="148" y="1757.600" width="32.500" height="2.400"/><rect x="148" y="1768" width="32.500" height="2.400"/><rect x="148" y="1778.400" width="32.500" height="2.400"/><rect x="153.500" y="1755.200" width="7.600" height="7.200"/><rect x="166.500" y="1765.600" width="7.600" height="7.200"/><rect x="153.500" y="1776" width="7.600" height="7.200"/></g></svg>
<div class="st" style="left:88.5px;">调试器</div>
<div class="st" style="left:1510px;">行 <b>5</b>，列 <b>30</b></div>
<div class="st" style="left:1667px;letter-spacing:.3px">UTF-<b>8</b></div>
<div class="st" style="left:1768.5px;">LF</div>
<div class="st" style="left:1828.5px;">AXML</div>
<div class="abs" style="left:1926px;top:0;width:2px;height:64px;background:#1c1c24"></div>
<div class="st" style="left:1960.5px;color:#a9a9b0;font-weight:500;-webkit-text-stroke-width:.4px">页面路径</div>
<div class="st" style="left:2072px;color:#b1b1b8;font-weight:700">pages/todos/todos</div>
<div class="vsep" style="left:2499.500px;top:20px;height:24px;background:#4b4b56"></div>
<div class="st" style="left:2534.5px;color:#a9a9b0;font-weight:500;-webkit-text-stroke-width:.4px">页面参数</div>
<div class="abs" style="left:2678px;top:0;width:2px;height:64px;background:#1c1c24"></div>
<svg class="abs" style="left:2714px;top:23px" width="20" height="20" viewBox="0 0 20 20"><g fill="#d8d8dc"><rect x=".400" y=".600" width="8.400" height="8.400"/><rect x="10.800" y=".600" width="8.400" height="8.400"/><rect x=".400" y="11" width="8.400" height="8.400"/><rect x="10.800" y="11" width="8.400" height="8.400"/></g></svg>
</div>
<div id="pop">
<svg class="abs" style="left:196px;top:-10px" width="28" height="11" viewBox="0 0 28 11"><path d="M2.500 11 L14 0 L25.500 11 Z" fill="#2b2c39"/></svg>
<div class="abs pl" style="left:33px;top:22px">线上版本</div><div class="abs pv" style="left:212px;top:22px">0.0.4</div>
<div class="abs pl" style="left:33px;top:76px">本次上传版本</div><div class="abs pv" style="left:212px;top:76px">0.0.5</div>
<svg class="abs" style="left:287px;top:84px" width="26" height="26" viewBox="2625 234 26 26"><path fill="#2590f8" d="M2642 238.200 L2646.900 243.100 L2636.200 254 H2630.600 L2631 248.800 Z"/><rect x="2627.300" y="256.300" width="20.600" height="2.200" fill="#2590f8"/></svg>
<div class="abs pl" style="left:33px;top:133px">查看 <span style="color:#686873">上传日志 &gt;</span></div>
<div class="abs" style="left:32px;top:204px;width:356px;height:56px;background:#2492fc;border-radius:8px;text-align:center;font-size:26px;line-height:59px;color:#fff;font-weight:500;white-space:pre">上 传</div>
</div>
</div>
</div>
</body>
</html>
